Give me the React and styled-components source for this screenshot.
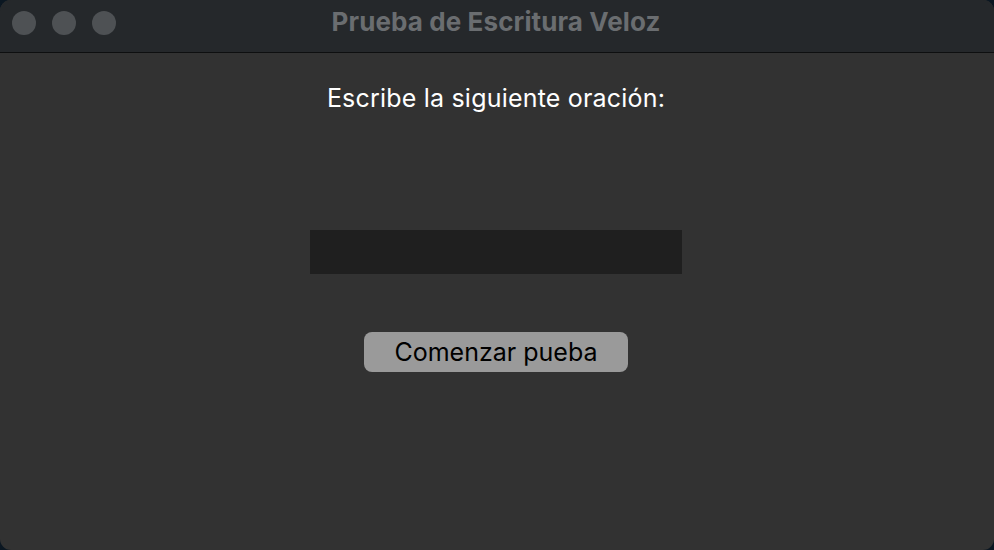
import React from 'react';
import styled, { createGlobalStyle } from 'styled-components';

const GlobalStyle = createGlobalStyle`
  html, body {
    margin: 0;
    padding: 0;
    background: #0b1722;
  }
  #root {
    width: 994px;
    height: 550px;
  }
`;

const App = () => (
  <>
    <GlobalStyle />
    <Window>
      <TitleBar>
        <Lights>
          <Light />
          <Light />
          <Light />
        </Lights>
        <Title>Prueba de Escritura Veloz</Title>
      </TitleBar>
      <Body>
        <Prompt>Escribe la siguiente oración:</Prompt>
        <Sentence />
        <Field />
        <StartButton>Comenzar pueba</StartButton>
      </Body>
    </Window>
  </>
);

export default App;

const Window = styled.div`
  width: 994px;
  height: 550px;
  border-radius: 11px;
  overflow: hidden;
  display: flex;
  flex-direction: column;
  background: #323232;
  font-family: Inter, 'Liberation Sans', sans-serif;
`;

const TitleBar = styled.div`
  height: 52px;
  flex: none;
  background: #25282b;
  border-bottom: 1px solid #0e0f10;
  display: flex;
  align-items: center;
  justify-content: center;
  position: relative;
`;

const Lights = styled.div`
  position: absolute;
  left: 12px;
  top: 11px;
  display: flex;
  gap: 16px;
`;

const Light = styled.span`
  width: 24px;
  height: 24px;
  border-radius: 50%;
  background: #4e5154;
`;

const Title = styled.div`
  color: #6a6d70;
  font-size: 26px;
  font-weight: 700;
  line-height: 32px;
  letter-spacing: 0.1px;
  margin-top: -8px;
  margin-left: -2px;
`;

const Body = styled.div`
  flex: 1;
  display: flex;
  flex-direction: column;
  align-items: center;
  padding-top: 29px;
  padding-right: 2px;
`;

const Prompt = styled.div`
  color: #ffffff;
  font-size: 25px;
  line-height: 32px;
  letter-spacing: 0.2px;
`;

const Sentence = styled.div`
  height: 116px;
`;

const Field = styled.div`
  width: 372px;
  height: 44px;
  background: #1f1f1f;
`;

const StartButton = styled.button`
  margin-top: 58px;
  width: 264px;
  height: 40px;
  border: none;
  border-radius: 8px;
  background: #9a9a9a;
  color: #000;
  font-family: Inter, 'Liberation Sans', sans-serif;
  font-size: 25px;
  padding: 0;
  line-height: 40px;
`;
